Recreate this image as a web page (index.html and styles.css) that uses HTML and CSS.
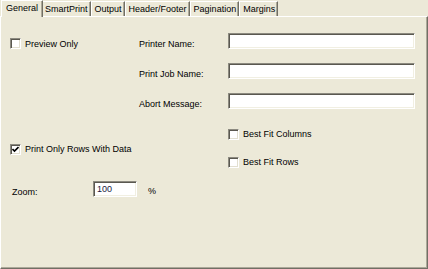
FILE: index.html
```html
<!DOCTYPE html>
<html lang="en">
<head>
    <meta charset="UTF-8">
    <title>Print Options</title>
    <link rel="stylesheet" href="styles.css">
</head>
<body>

    <div class="tabs">
        <div class="tab active">General</div>
        <div class="tab">SmartPrint</div>
        <div class="tab">Output</div>
        <div class="tab">Header/Footer</div>
        <div class="tab">Pagination</div>
        <div class="tab">Margins</div>
    </div>

    <div class="panel">
        <div class="form-grid">
            <label class="check top"><span class="box"></span>Preview Only</label>
            <span class="label">Printer Name:</span>
            <span class="field"></span>

            <span></span>
            <span class="label">Print Job Name:</span>
            <span class="field"></span>

            <span></span>
            <span class="label">Abort Message:</span>
            <span class="field"></span>
        </div>

        <div class="lower">
            <div class="left-col">
                <label class="check">
                    <span class="box">
                        <svg width="7" height="7" viewBox="0 0 7 7"><path d="M0.5 3 L2.5 5 L6.5 1" fill="none" stroke="#000" stroke-width="1.6"/></svg>
                    </span>Print Only Rows With Data
                </label>

                <div class="zoom-row">
                    <span class="zoom-label">Zoom:</span>
                    <span class="field small">100</span>
                    <span class="unit">%</span>
                </div>
            </div>

            <div class="right-col">
                <label class="check"><span class="box"></span>Best Fit Columns</label>
                <label class="check"><span class="box"></span>Best Fit Rows</label>
            </div>
        </div>
    </div>

</body>
</html>
```

FILE: styles.css
```css
body {
    margin: 0;
    width: 428px;
    height: 269px;
    overflow: hidden;
    background: #ece9d8;
    font-family: "Liberation Sans", Arial, sans-serif;
    font-size: 9px;
    color: #000;
}

/* tab strip */
.tabs {
    display: flex;
    align-items: flex-end;
    height: 16px;
    padding-left: 2px;
    position: relative;
    z-index: 1;
}

.tab {
    height: 14px;
    line-height: 14px;
    padding: 0 2px 0 3px;
    background: #ece9d8;
    border-top: 1px solid #fff;
    border-left: 1px solid #fff;
    border-right: 1px solid #716f64;
    box-shadow: inset -1px 0 #aca899;
    white-space: nowrap;
}

.tab.active {
    height: 16px;
    line-height: 14px;
    margin: 0 -2px -1px -1px;
    padding: 0 4px;
    position: relative;
    z-index: 2;
}

/* page body */
.panel {
    box-sizing: border-box;
    height: 253px;
    padding: 16px 0 0 9px;
    border-top: 1px solid #fff;
    border-left: 1px solid #fff;
    border-right: 1px solid #716f64;
    border-bottom: 1px solid #716f64;
    box-shadow: inset -1px -1px #aca899;
}

.form-grid {
    display: grid;
    grid-template-columns: 129px 89px 187px;
    grid-auto-rows: 16px;
    row-gap: 14px;
    align-items: center;
}

.label {
    margin-top: 5px;
}

.check {
    display: flex;
    align-items: center;
    gap: 4px;
    height: 12px;
    line-height: 12px;
    white-space: nowrap;
}

.check.top {
    margin-top: 5px;
}

.box {
    box-sizing: border-box;
    width: 11px;
    height: 11px;
    display: flex;
    align-items: center;
    justify-content: center;
    background: #fff;
    border: 1px solid;
    border-color: #8c8a80 #fff #fff #8c8a80;
    box-shadow: inset 1px 1px #5a5850, inset -1px -1px #e2dfd0;
}

.box svg {
    display: block;
}

.field {
    box-sizing: border-box;
    height: 16px;
    background: #fff;
    border: 1px solid;
    border-color: #8c8a80 #fff #fff #8c8a80;
    box-shadow: inset 1px 1px #5a5850, inset -1px -1px #f1efe2;
}

.lower {
    display: flex;
    margin-top: 19px;
}

.left-col {
    width: 218px;
    padding-top: 15px;
}

.right-col {
    display: flex;
    flex-direction: column;
    gap: 16px;
}

.zoom-row {
    display: flex;
    align-items: center;
    margin-top: 26px;
    height: 16px;
}

.zoom-label {
    width: 81px;
    padding-left: 2px;
    margin-top: 5px;
}

.field.small {
    width: 44px;
    padding: 1px 0 0 3px;
    line-height: 13px;
    color: #1a1a40;
}

.unit {
    margin-left: 11px;
    margin-top: 3px;
}
```
